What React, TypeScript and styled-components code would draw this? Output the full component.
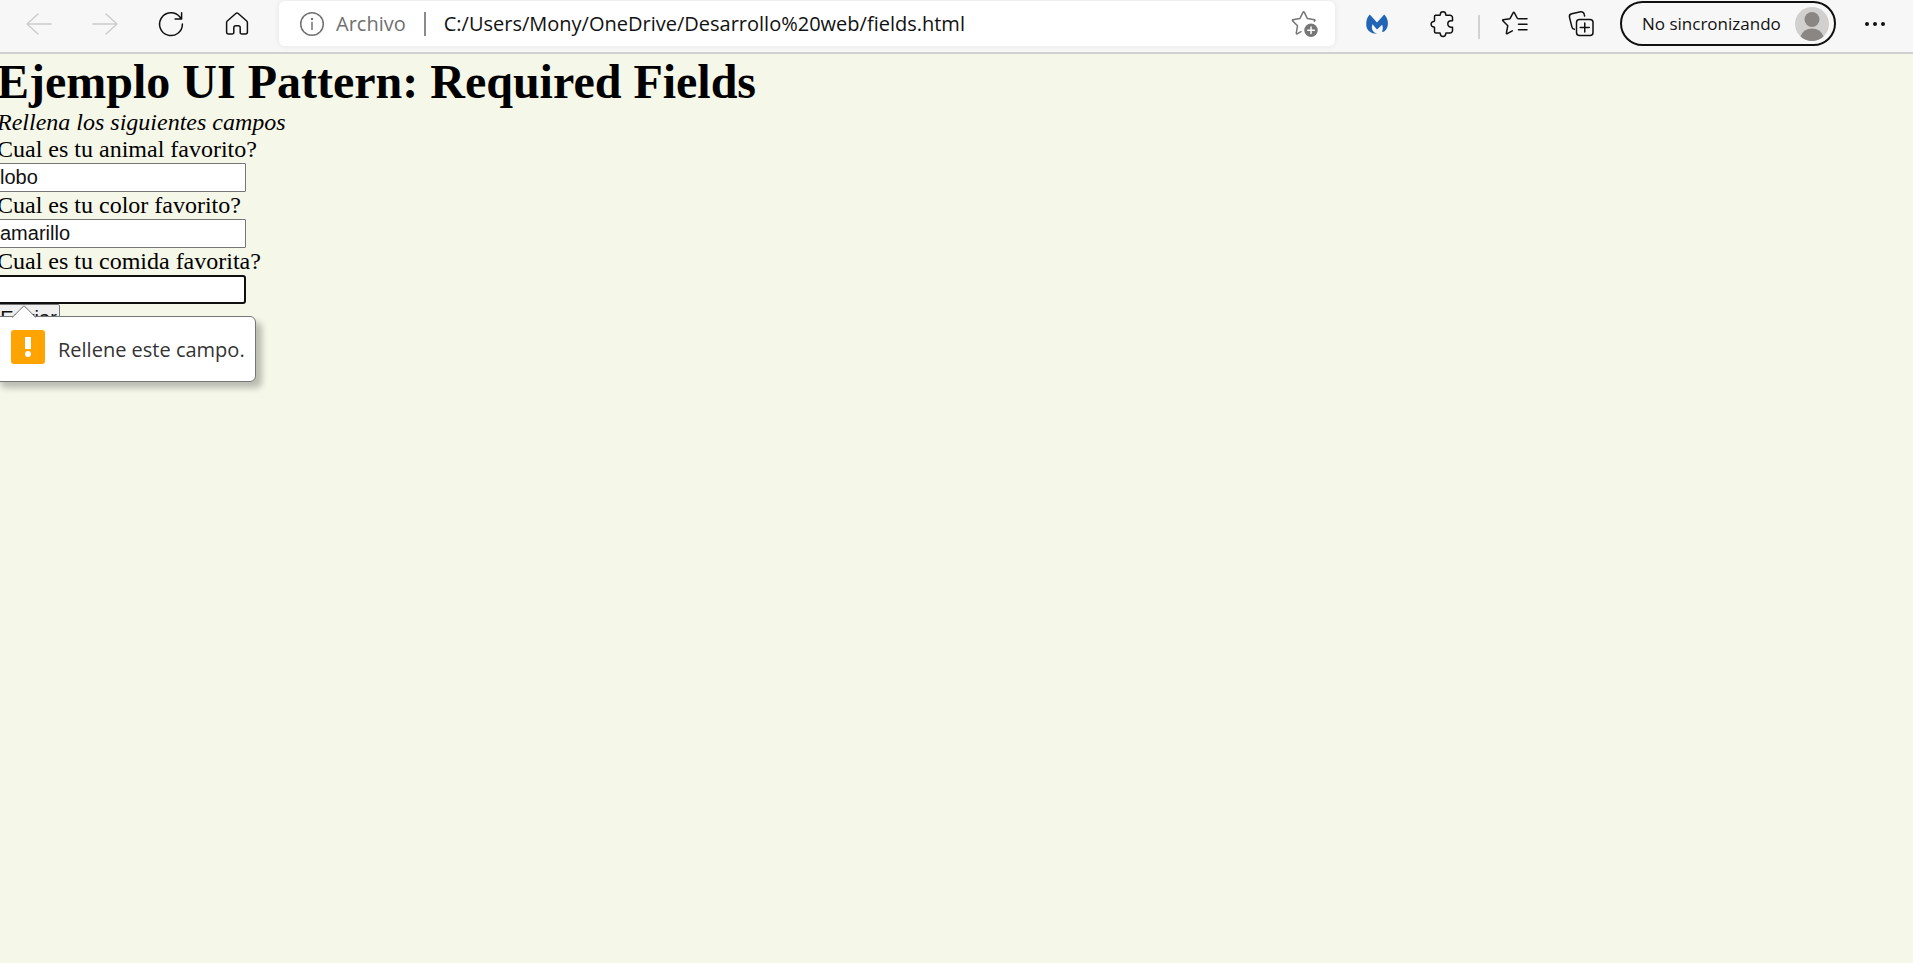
import React from "react";
import styled, { createGlobalStyle } from "styled-components";

const GlobalStyle = createGlobalStyle`
  *, *::before, *::after { box-sizing: border-box; }
  html, body, #root { min-height: 100vh; }
  body {
    margin: 0;
    overflow-x: hidden;
    background: #f5f7e9;
    color: #000;
    font-family: "Liberation Serif", "Times New Roman", serif;
    font-size: 24px;
    line-height: 27px;
  }
`;

const uiFont = `"Open Sans", "Segoe UI", sans-serif`;

const Toolbar = styled.header`
  display: flex;
  align-items: flex-start;
  height: 54px;
  padding: 1px 5px 0 6px;
  background: #f7f7f7;
  border-bottom: 2px solid #d0d0d0;
  font-family: ${uiFont};
`;

const IconButton = styled.button<{ $muted?: boolean }>`
  display: flex;
  flex: none;
  align-items: center;
  justify-content: center;
  width: 66px;
  height: 45px;
  padding: 0;
  border: 0;
  background: none;
  color: ${(p) => (p.$muted ? "#cdcdcd" : "#111")};
`;

const Icon = styled.svg`
  display: block;
  flex: none;
  width: 28px;
  height: 28px;
  fill: none;
  stroke: currentColor;
  stroke-width: 1.5;
  stroke-linecap: round;
  stroke-linejoin: round;
`;

const AddressBar = styled.div`
  display: flex;
  flex: 1;
  align-items: center;
  min-width: 0;
  height: 45px;
  margin: 0 9px;
  padding: 0 16px 0 19px;
  border-radius: 6px;
  background: #fff;
  box-shadow: 0 0 6px rgba(0, 0, 0, 0.08);
  color: #707070;
`;

const Scheme = styled.span`
  margin-left: 10px;
  font-size: 20px;
`;

const Divider = styled.span<{ $color: string; $gap: number }>`
  flex: none;
  width: 2px;
  height: 24px;
  margin: 0 ${(p) => p.$gap}px;
  background: ${(p) => p.$color};
`;

const Url = styled.input`
  flex: 1;
  min-width: 0;
  padding: 0;
  border: 0;
  outline: 0;
  background: none;
  color: #111;
  font-family: ${uiFont};
  font-size: 20px;
`;

const StarButton = styled(IconButton)`
  width: 28px;
  color: #767676;
`;

const ToolbarRule = styled(Divider)`
  align-self: center;
`;

const Profile = styled.button`
  display: flex;
  flex: none;
  align-items: center;
  justify-content: space-between;
  width: 216px;
  height: 45px;
  margin: 0 6px;
  padding: 0 5px 0 20px;
  border: 2px solid #111;
  border-radius: 23px;
  background: none;
  color: #111;
  font-family: ${uiFont};
  font-size: 17px;
  white-space: nowrap;
`;

const Avatar = styled.svg`
  flex: none;
  width: 34px;
  height: 34px;
`;

const Form = styled.form`
  margin-left: -3px;
`;

const Title = styled.h1`
  margin: 0;
  padding-top: 1px;
  font-size: 48px;
  line-height: 54px;
`;

const Hint = styled.p`
  margin: 0;
  font-style: italic;
`;

const Field = styled.div`
  position: relative;
`;

const Label = styled.label`
  display: block;
`;

const TextInput = styled.input<{ $active?: boolean }>`
  display: block;
  width: 249px;
  height: 29px;
  padding: 0 2px;
  border: ${(p) => (p.$active ? "2px solid #101010" : "1px solid #767676")};
  border-radius: ${(p) => (p.$active ? 3 : 1)}px;
  outline: 0;
  background: #fff;
  color: #111;
  font-family: "Liberation Sans", Arial, sans-serif;
  font-size: 20px;
`;

const Submit = styled.button`
  display: block;
  width: 63px;
  height: 29px;
  padding: 0;
  border: 1px solid #767676;
  border-radius: 2px;
  background: #efefef;
  color: #111;
  font-family: "Liberation Sans", Arial, sans-serif;
  font-size: 20px;
`;

const Bubble = styled.div`
  position: absolute;
  z-index: 1;
  top: 68px;
  left: -3px;
  display: flex;
  align-items: center;
  width: 262px;
  height: 66px;
  padding: 0 0 0 16px;
  border: 1px solid #767676;
  border-radius: 6px;
  background: #fff;
  box-shadow: 6px 6px 6px rgba(0, 0, 0, 0.24);
  color: #333;
  font-family: ${uiFont};
  font-size: 20px;
  white-space: nowrap;
`;

const BubbleArrow = styled.svg`
  position: absolute;
  top: -12px;
  left: 17px;
  width: 24px;
  height: 13px;
`;

const Warning = styled.svg`
  flex: none;
  width: 34px;
  height: 34px;
  margin: 0 13px 4px 0;
`;

const questions = [
  { id: "animal", label: "Cual es tu animal favorito?", value: "lobo" },
  { id: "color", label: "Cual es tu color favorito?", value: "amarillo" },
  { id: "comida", label: "Cual es tu comida favorita?", value: "" },
];

function ValidationBubble() {
  return (
    <Bubble role="alert">
      <BubbleArrow viewBox="0 0 24 13">
        <path d="M0 13L12 1L24 13" fill="#fff" />
        <path d="M0 12.5L12 .8L24 12.5" fill="none" stroke="#767676" />
      </BubbleArrow>
      <Warning viewBox="0 0 34 34">
        <rect width="34" height="34" rx="3" fill="#ffa300" />
        <path d="M14 7h6v12h-6z" fill="#fff" />
        <circle cx="17" cy="24" r="3" fill="#fff" />
      </Warning>
      <span>Rellene este campo.</span>
    </Bubble>
  );
}

function BrowserBar() {
  return (
    <Toolbar>
      <IconButton $muted aria-label="Atrás">
        <Icon viewBox="0 0 28 28"><path d="M26 14H2M13 4L2 14l11 10" /></Icon>
      </IconButton>
      <IconButton $muted aria-label="Adelante">
        <Icon viewBox="0 0 28 28"><path d="M2 14h24M15 4l11 10-11 10" /></Icon>
      </IconButton>
      <IconButton aria-label="Actualizar">
        <Icon viewBox="0 0 28 28"><path d="M25.4 14A11.4 11.4 0 1 1 22.7 6.8L24 8.6M24.6 2.8V9h-6.5" /></Icon>
      </IconButton>
      <IconButton aria-label="Inicio">
        <Icon viewBox="0 0 28 28">
          <path d="M12.8 3.5L4.3 11a2 2 0 0 0-.7 1.5V22a2 2 0 0 0 2 2h3.6a1.6 1.6 0 0 0 1.6-1.6v-4.6a2 2 0 0 1 2-2h2.4a2 2 0 0 1 2 2v4.6a1.6 1.6 0 0 0 1.6 1.6h3.6a2 2 0 0 0 2-2v-9.5a2 2 0 0 0-.7-1.5l-8.5-7.5a1.8 1.8 0 0 0-2.4 0z" />
        </Icon>
      </IconButton>
      <AddressBar>
        <Icon viewBox="0 0 28 28">
          <circle cx="14" cy="14" r="11.3" />
          <path d="M14 12.5v7" />
          <circle cx="14" cy="9" r=".5" />
        </Icon>
        <Scheme>Archivo</Scheme>
        <Divider $color="#8b8b8b" $gap={18} />
        <Url aria-label="Dirección" readOnly value="C:/Users/Mony/OneDrive/Desarrollo%20web/fields.html" />
        <StarButton aria-label="Agregar a favoritos">
          <Icon viewBox="0 0 28 28">
            <path d="M10 21.7l-3.8 2.1a.6.6 0 0 1-.9-.7l1.2-7.3-5-5.1a.6.6 0 0 1 .3-1l7-1.1 3.3-6.4a.6.6 0 0 1 1.1 0l3.2 6.4 7.1 1.1a.6.6 0 0 1 .3 1l-.5.5" />
            <circle cx="20" cy="20.3" r="6.7" fill="currentColor" stroke="none" />
            <path d="M20 17v6.6M16.7 20.3h6.6" stroke="#fff" />
          </Icon>
        </StarButton>
      </AddressBar>
      <IconButton aria-label="Malwarebytes">
        <Icon viewBox="0 0 28 28">
          <path
            fill="#2265b5"
            stroke="none"
            d="M6.800 4.500L14 12.500l7.200-8c4.500 4.300 5.300 12.300.6 16.600-1.300 1.100-3 1.300-2.600.2.900-2.400.7-4.700-.1-6.600L14 19.500l-4.500-5.300c-1.600 4.300-.1 7.700 4.500 9.600-5.500.2-10.200-3-10.700-8C2.900 11 4 7.200 6.800 4.500z"
          />
        </Icon>
      </IconButton>
      <IconButton aria-label="Extensiones">
        <Icon viewBox="0 0 28 28">
          <path d="M6.500 5.300h4.100c.6 0 .7-.3.7-.8a2.700 2.700 0 0 1 5.400 0c0 .5.100.8.700.8H21a2.500 2.500 0 0 1 2.500 2.500v2.900h-1.400a3.300 3.300 0 0 0 0 6.600h1.400v3.200a2.500 2.500 0 0 1-2.500 2.500h-3.600c-.6 0-.7.3-.7.700a2.700 2.700 0 0 1-5.400 0c0-.4-.1-.7-.7-.7H7a1.500 1.500 0 0 1-1.500-1.500v-3.900c0-.6-.3-.7-.7-.7a2.700 2.700 0 0 1 0-5.400c.4 0 .7-.1.7-.7V6.800a1.500 1.500 0 0 1 1-1.500z" />
        </Icon>
      </IconButton>
      <ToolbarRule $color="#d2d2d2" $gap={2} />
      <IconButton aria-label="Favoritos">
        <Icon viewBox="0 0 28 28">
          <path d="M11.300 20.800l-5 2.900a.6.6 0 0 1-.9-.7l1.400-7.300-5-5a.6.6 0 0 1 .3-1l6.900-1 3.200-6.100a.6.6 0 0 1 1.100 0l3.100 5.900M17.500 8.700h8.500M17.500 14.200h8.500M17.500 19.700h8.500" />
        </Icon>
      </IconButton>
      <IconButton aria-label="Colecciones">
        <Icon viewBox="0 0 28 28">
          <path d="M7.300 19.300a3 3 0 0 1-2.400-2.400L2.500 7.400A3 3 0 0 1 4.700 3.800l9-2a3 3 0 0 1 3.500 2.400l.4 1.800" />
          <rect x="9.500" y="9.500" width="16.500" height="16" rx="3" />
          <path d="M17.750 13v9M13.250 17.500h9" />
        </Icon>
      </IconButton>
      <Profile>
        No sincronizando
        <Avatar viewBox="0 0 34 34">
          <circle cx="17" cy="17" r="17" fill="#d2d0ce" />
          <circle cx="17" cy="12.500" r="7.500" fill="#8a8683" />
          <path d="M5.500 29.400a12.300 12.300 0 0 1 23 0A17 17 0 0 1 5.500 29.400z" fill="#8a8683" />
        </Avatar>
      </Profile>
      <IconButton aria-label="Configuración y más">
        <Icon viewBox="0 0 28 28">
          <g fill="currentColor" stroke="none">
            <circle cx="6" cy="14" r="2" />
            <circle cx="14" cy="14" r="2" />
            <circle cx="22" cy="14" r="2" />
          </g>
        </Icon>
      </IconButton>
    </Toolbar>
  );
}

export default function App() {
  return (
    <>
      <GlobalStyle />
      <BrowserBar />
      <main>
        <Form noValidate onSubmit={(e) => e.preventDefault()}>
          <Title>Ejemplo UI Pattern: Required Fields</Title>
          <Hint>Rellena los siguientes campos</Hint>
          {questions.map((q) => (
            <Field key={q.id}>
              <Label htmlFor={q.id}>{q.label}</Label>
              <TextInput id={q.id} type="text" required defaultValue={q.value} $active={!q.value} />
              {!q.value && <ValidationBubble />}
            </Field>
          ))}
          <Submit type="submit">Enviar</Submit>
        </Form>
      </main>
    </>
  );
}
